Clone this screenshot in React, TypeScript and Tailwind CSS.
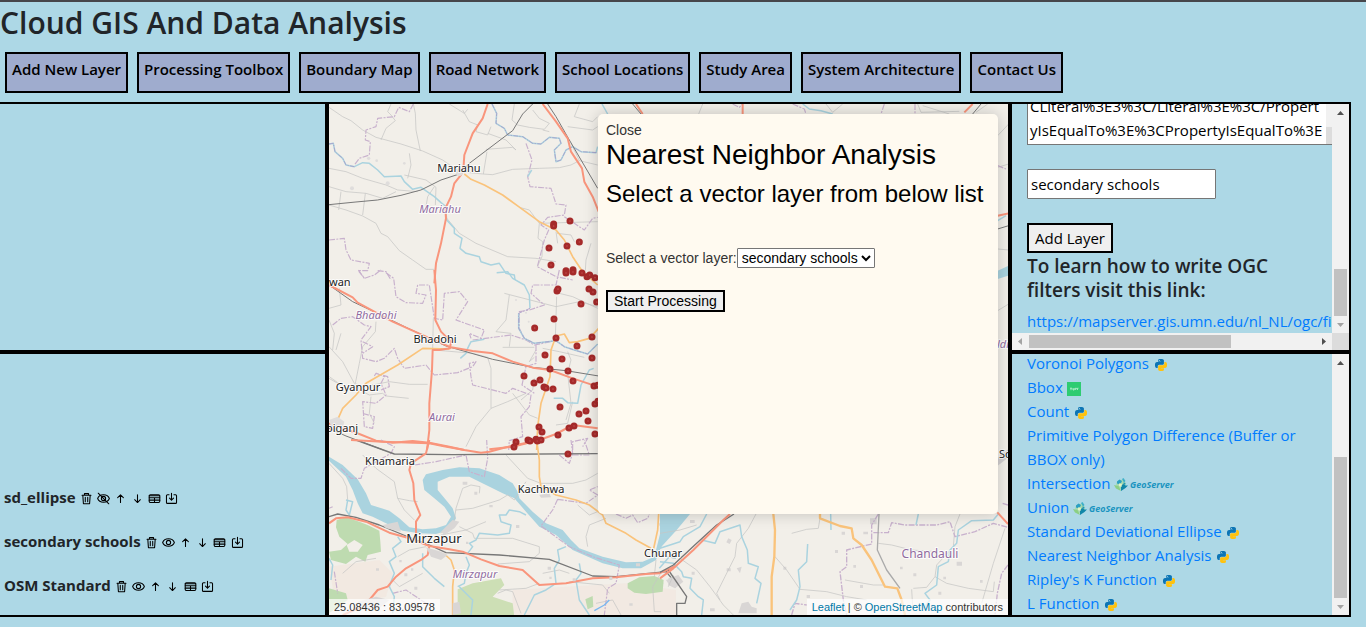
import type { ReactNode } from 'react';

const navItems = [
  'Add New Layer',
  'Processing Toolbox',
  'Boundary Map',
  'Road Network',
  'School Locations',
  'Study Area',
  'System Architecture',
  'Contact Us',
];

const layers = [
  { name: 'sd_ellipse', visible: false },
  { name: 'secondary schools', visible: true },
  { name: 'OSM Standard', visible: true },
];

const tools = [
  { name: 'Voronoi Polygons', engine: 'python' },
  { name: 'Bbox', engine: 'turf' },
  { name: 'Count', engine: 'python' },
  { name: 'Primitive Polygon Difference (Buffer or BBOX only)', engine: '' },
  { name: 'Intersection', engine: 'geoserver' },
  { name: 'Union', engine: 'geoserver' },
  { name: 'Standard Deviational Ellipse', engine: 'python' },
  { name: 'Nearest Neighbor Analysis', engine: 'python' },
  { name: "Ripley's K Function", engine: 'python' },
  { name: 'L Function', engine: 'python' },
];

const northSchools = [
  [683, 372], [683, 378], [732, 363], [760, 426], [669, 444], [723, 438], [675, 495], [720, 512],
  [720, 519], [741, 509], [741, 516], [768, 519], [783, 530], [791, 525], [807, 533],
];

const southSchools = [
  [693, 63], [696, 57], [789, 57], [801, 66], [765, 102], [812, 96], [684, 147], [626, 174], [690, 204],
  [798, 201], [753, 228], [657, 255], [708, 267], [798, 264], [672, 297], [726, 303], [741, 333],
  [594, 318], [624, 339], [642, 330], [654, 351], [660, 354], [681, 357], [804, 348], [815, 346],
  [702, 411], [807, 402], [816, 394], [780, 423], [759, 432], [786, 453], [744, 468], [729, 474],
  [639, 471], [648, 486], [696, 495], [807, 492], [606, 510], [612, 513], [630, 508], [634, 513],
  [645, 510], [570, 516], [564, 531], [726, 552],
];

function PythonIcon() {
  return (
    <svg viewBox="0 0 24 24" className="ml-0.5 inline-block size-3" aria-hidden="true">
      <path fill="#0c75b5" d="M14.25.18l.9.2.73.26.59.3.45.32.34.34.25.34.16.33.1.3.04.26.02.2-.01.13V8.5l-.05.63-.13.55-.21.46-.26.38-.3.31-.33.25-.35.19-.35.14-.33.1-.3.07-.26.04-.21.02H8.77l-.69.05-.59.14-.5.22-.41.27-.33.32-.27.35-.2.36-.15.37-.1.35-.07.32-.04.27-.02.21v3.06H3.17l-.21-.03-.28-.07-.32-.12-.35-.18-.36-.26-.36-.36-.35-.46-.32-.59-.28-.73-.21-.88-.14-1.05-.05-1.23.06-1.22.16-1.04.24-.87.32-.71.36-.57.4-.44.42-.33.42-.24.4-.16.36-.1.32-.05.24-.01h.16l.06.01h8.16v-.83H6.18l-.01-2.75-.02-.37.05-.34.11-.31.17-.28.25-.26.31-.23.38-.2.44-.18.51-.15.58-.12.64-.1.71-.06.77-.04.84-.02 1.27.05zm-6.3 1.98l-.23.33-.08.41.08.41.23.34.33.22.41.09.41-.09.33-.22.23-.34.08-.41-.08-.41-.23-.33-.33-.22-.41-.09-.41.09z" />
      <path fill="#ffc20e" d="M21.1 6.11l.28.06.32.12.35.18.36.27.36.35.35.47.32.59.28.73.21.88.14 1.04.05 1.23-.06 1.23-.16 1.04-.24.86-.32.71-.36.57-.4.45-.42.33-.42.24-.4.16-.36.09-.32.05-.24.02-.16-.01h-8.22v.82h5.84l.01 2.76.02.36-.05.34-.11.31-.17.29-.25.25-.31.24-.38.2-.44.17-.51.15-.58.13-.64.09-.71.07-.77.04-.84.01-1.27-.04-1.07-.14-.9-.2-.73-.25-.59-.3-.45-.33-.34-.34-.25-.34-.16-.33-.1-.3-.04-.25-.02-.2.01-.13v-5.34l.05-.64.13-.54.21-.46.26-.38.3-.32.33-.24.35-.2.35-.14.33-.1.3-.06.26-.04.21-.02.13-.01h5.84l.69-.05.59-.14.5-.21.41-.28.33-.32.27-.35.2-.36.15-.36.1-.35.07-.32.04-.28.02-.21V6.07h2.09z" />
    </svg>
  );
}

function TurfIcon() {
  return (
    <svg viewBox="0 0 14 14" className="inline-block size-3.5" aria-hidden="true">
      <rect width="14" height="14" fill="#2ecc71" />
      <path d="M3 6.2h2M4 6.2v2M6 6v2h1.2V6M8.4 8V6.2h1v1M10.5 8V6.2h1" stroke="#d9f7e5" strokeWidth=".7" fill="none" />
    </svg>
  );
}

function GeoServerIcon() {
  return (
    <svg viewBox="0 0 61 14" className="inline-block h-3.5 w-[61px]" aria-hidden="true">
      <circle cx="7" cy="6.500" r="4.800" fill="#a5d9b0" />
      <path d="M3 3.500L5.500 1.500 8 3 7 5 4.500 6 3 5.500z" fill="#2a9fc4" />
      <path d="M8 1l1.500-1 2 3L10 4.500z" fill="#3fb0c8" />
      <path d="M0 7l4.500 1L7 13 2 10.500z" fill="#8ccf84" />
      <path d="M7 7.500L9.500 6l2 1.500H14L11.500 10 7 13z" fill="#1187a8" />
      <path d="M5 5.500l3 .5L7.500 9 5 8z" fill="#e2f3c4" />
      <path d="M9.500 4.500l2 .5-.5 2-1.500-1z" fill="#1f94b8" />
      <text x="16" y="10" fontFamily="'Open Sans', sans-serif" fontSize="9" fontStyle="italic" fontWeight="700" fill="#1a94c0">
        GeoServer
      </text>
    </svg>
  );
}

function IconButton({ label, children }: { label: string; children: ReactNode }) {
  return (
    <button type="button" aria-label={label} className="inline-block align-middle">
      <svg viewBox="0 0 16 16" className="size-[13px] fill-none stroke-black" strokeWidth="1.300" strokeLinecap="round" strokeLinejoin="round">
        {children}
      </svg>
    </button>
  );
}

function LayerRow({ name, visible }: { name: string; visible: boolean }) {
  return (
    <li className="text-base leading-6 whitespace-nowrap">
      <span className="text-[15px] font-bold">{name}</span>{' '}
      <IconButton label={`Remove ${name}`}>
        <path d="M2.500 4h11M5.500 4V2h5v2M3.500 4.500l.7 10h7.600l.7-10M6.500 6.500v5.500M9.500 6.500v5.500" />
      </IconButton>{' '}
      <IconButton label={visible ? `Hide ${name}` : `Show ${name}`}>
        <path d="M.8 8C3 1.800 13 1.800 15.200 8 13 14.200 3 14.200.8 8z" />
        <circle cx="8" cy="8" r="2.600" />
        {!visible && <path d="M1.500 1.500l13 13" />}
      </IconButton>{' '}
      <IconButton label={`Move ${name} up`}>
        <path d="M8 13V3.500M4.500 7L8 3.500 11.500 7" />
      </IconButton>{' '}
      <IconButton label={`Move ${name} down`}>
        <path d="M8 3.500V13M4.500 9.500L8 13l3.500-3.500" />
      </IconButton>{' '}
      <IconButton label={`Attribute table of ${name}`}>
        <rect x="1.500" y="3.500" width="13" height="9.500" rx="1.500" />
        <path d="M1.500 4.500h13M1.500 7h13M1.500 10h13M8 7v6" />
      </IconButton>{' '}
      <IconButton label={`Download ${name}`}>
        <path d="M5 3.500H3Q1.800 3.500 1.800 4.700V12.800Q1.800 14 3 14H13Q14.200 14 14.200 12.800V4.700Q14.200 3.500 13 3.500H11M8 1.500V10M5.500 7.500L8 10l2.500-2.500" />
      </IconButton>
    </li>
  );
}

function Arrow({ d, dim = false }: { d: string; dim?: boolean }) {
  return (
    <svg viewBox="0 0 17 17" className="size-[17px] shrink-0" aria-hidden="true">
      <path d={d} fill={dim ? '#a3a3a3' : '#505050'} />
    </svg>
  );
}

function VerticalBar({ children }: { children: ReactNode }) {
  return (
    <div className="flex w-[17px] shrink-0 flex-col items-center bg-[#f1f1f1]">
      <Arrow d="M5 11h7L8.500 7z" />
      {children}
      <Arrow d="M5 7h7L8.500 11z" dim />
    </div>
  );
}

function Dots({ points }: { points: number[][] }) {
  return (
    <>
      {points.map(([x, y]) => (
        <g key={`${x}-${y}`}>
          <circle cx={x} cy={y} r="10.500" fill="#a52a2a" />
          <circle cx={x} cy={y} r="2.500" fill="#c24b4b" />
        </g>
      ))}
    </>
  );
}

// Each group is drawn at three units to the pixel and placed on the map
function BaseMap() {
  const road = { stroke: '#f9957c', strokeWidth: 6 };
  const primary = { stroke: '#fac37b', strokeWidth: 5 };
  const rail = { stroke: '#777', strokeWidth: 3 };
  const minor = { stroke: '#c6c5c4', strokeWidth: 2.2 };
  const river = { stroke: '#aad3df', strokeWidth: 4.5 };
  const border = { stroke: '#c8b1cd', strokeWidth: 3.5, strokeDasharray: '18 4 6 4' };
  return (
    <svg
      viewBox="0 0 679 511"
      preserveAspectRatio="xMinYMin slice"
      className="absolute inset-0 size-full bg-[#f2efe9]"
      fill="none"
      strokeLinejoin="round"
      role="img"
      aria-label="Map of the study area"
    >
      {/* north west */}
      <g transform="translate(-3 -4) scale(.33333)">
        <g {...minor}>
          <path d="M9 22L50 50 75 62 110 90 150 112 225 132 290 153 350 180 400 215 470 222 500 224 560 208 640 205 700 203 735 195 760 182 815 195" />
          <path d="M165 120L180 85 208 62 195 45 185 35 195 12M262 12L268 40 270 90 283 153M250 160L255 195 245 235M483 155L472 222M370 12L415 40 425 28M410 30L430 65 455 75 450 95 485 105 495 80M485 100L540 120 570 150 560 142 480 148M565 12L558 60 575 75 610 82 655 88 670 70 640 55 620 30M650 90L670 95M9 205L60 215 110 235 180 255 215 270 275 275M9 260L60 275 120 280 170 295 210 275M45 275L38 330M118 280L110 345M9 315L60 330 110 348 150 370 165 400 185 410 220 452 260 480 300 508 325 508" />
          <path d="M360 352L400 400 450 430 545 470 630 475 690 485M325 260L305 290 300 320M235 225L300 240 330 262 328 315M580 322L610 330 640 370 636 415 650 425 648 470 634 500M690 395L695 430M693 400L735 405 745 425M795 430L780 480 778 512M760 12L745 50 800 65 815 50M725 80L800 90 815 80M760 182L735 130M640 370L815 365" />
        </g>
        <g {...border}>
          <path d="M262 12L250 35 218 22 205 50 155 55 150 80 120 90 118 120 133 125 130 165 100 175 85 195M9 420L55 415 60 450 75 480 130 490 125 512 97 512 115 535M155 512L180 515 195 540M600 130L618 180 605 230 612 260 675 265 690 312 720 315 715 345 665 352 645 375 668 390 655 420 634 500 690 530 740 540M715 350L745 370 775 390 800 355 815 352" />
        </g>
        <g {...river}>
          <path d="M9 132L22 130 27 155 50 175 60 195 85 200 110 188 130 190 155 210 175 230 225 228 235 245 260 268 285 262 325 290 345 308 358 318 362 360 385 385 385 400 408 415 402 445 420 460 460 470 465 485 495 495 520 490 540 520 565 525 567 540" />
          <path d="M498 12L512 40 510 70 535 85 545 105 590 110 620 130 645 132 670 112 700 115 705 130 685 150 690 185 705 180 720 150 740 140 765 155 810 158 815 140" />
          <path d="M617 210L605 230" />
        </g>
        <g stroke="#a79ac8" strokeWidth="2.400" strokeDasharray="14 4 4 4">
          <path d="M498 12L512 40 510 70 535 85 545 105 590 110 620 130 645 132 670 112 700 115 705 130 685 150 690 185 705 180 720 150 740 140 765 155 815 158M9 132L22 130 27 155 50 175 60 195 85 200" />
        </g>
        <g {...rail}>
          <path d="M9 314L90 306 155 300 225 286 285 270 345 240 400 222 430 190 545 103 560 92 590 42 620 12M665 12L690 50 730 120 815 265" />
        </g>
        <path {...primary} d="M415 222L435 238 475 255 530 285 578 320 640 365 690 390 715 420 740 470 770 515 815 555" />
        <g {...road}>
          <path d="M485 12L470 55 440 100 415 165 413 195 405 225 385 250 375 290 358 325 360 355 345 430 330 490 325 550M650 12L690 65 725 115 735 155 768 205 775 245 800 290 818 335" />
        </g>
        <g fill="#dfdddc" stroke="none">
          <circle cx="185" cy="250" r="6" />
          <circle cx="78" cy="265" r="6" />
          <circle cx="128" cy="175" r="5" />
          <circle cx="152" cy="182" r="4" />
          <circle cx="235" cy="190" r="4" />
          <circle cx="400" cy="218" r="10" />
        </g>
      </g>

      {/* west */}
      <g transform="translate(-3 166) scale(.33333)">
        <g {...minor}>
          <path d="M40 55L45 105 9 115M150 155L148 185 110 230 100 280 88 340M9 230L50 275 85 340 115 350 155 342 190 335 250 343 305 343M10 320L45 345M100 360L130 375 170 370 180 378 248 385M9 150L25 190 20 240M45 190L30 240M322 145L320 240M325 240L440 250 485 262 495 295 495 415 450 470 420 530M495 415L545 395 600 370M535 70L690 110 760 95 815 110M550 75L540 150 510 185 555 190 550 230M530 232L625 232M692 80L688 205M625 262L610 275 630 240M650 235L700 245 775 262M725 245L735 270 725 310 735 400 720 450M625 325L620 360 585 390M700 70L740 80 815 115M740 395L725 460 690 465M560 370L610 435 635 445M9 325L35 340M135 380L130 430 145 460" />
        </g>
        <g {...border}>
          <path d="M97 0L115 25 145 15 165 0M180 8L203 25 210 80 240 98 290 100 300 75 270 70 275 45 310 45 325 145 350 150 355 70 400 65 425 95 390 150 475 180 465 205 430 190 435 205M20 165L45 145 80 140 115 165 135 170 105 210 110 265 150 275 175 265 205 235 215 265 235 295 300 285 325 315 395 308 440 290 450 275 430 280 435 320 440 345 540 370 560 355 615 375 610 410 585 440 590 500 550 512 548 540M110 215L140 230 110 250M150 310L175 320 165 340 180 375 150 400 110 395 115 470 140 475 145 440 110 430M440 210L555 195 600 210 625 225 690 212 715 230M630 225L630 280 600 290 588 345 625 370M700 0L690 45 620 45 615 70 655 105 610 120 580 125 580 175 595 205 625 220M740 540L740 515 785 505 770 530M145 318L150 310 185 320 190 350 165 360" />
        </g>
        <g {...river}>
          <path d="M403 265L420 250 425 235 435 215 475 208M512 8L545 5 560 25 595 45 610 75 612 115M578 130L578 175 595 205 625 220 690 212 715 230 745 240 785 252 815 222M803 295L790 300 765 345 755 400 725 398 710 385 683 385" />
        </g>
        <g stroke="#a79ac8" strokeWidth="2.400" strokeDasharray="14 4 4 4">
          <path d="M612 115L578 130 578 175 595 205 625 220 690 212 715 230 745 240 785 252 815 222" />
        </g>
        <path {...rail} d="M9 45L80 95 150 128 240 172 360 228 500 268 620 292 720 302 818 318M9 475L60 498 172 540" />
        <g {...primary}>
          <path d="M370 237L290 235 215 285 120 340 90 375 50 415 30 460M818 175L790 205 755 215 730 218 715 192 690 198 675 240 672 320 645 400 635 470 632 540" />
        </g>
        <g {...road}>
          <path d="M9 45L80 82 95 98 200 155 300 200 375 232 440 243 500 250 560 275 620 293 672 300 740 325 815 350M325 0L330 60 328 150 345 185 375 215 372 235 340 240 320 240 318 300 310 400 310 480 303 540M9 460L100 492 150 512 200 518 260 513 310 518 370 530 415 540M490 538L560 530 640 510 690 492 740 465 815 475" />
        </g>
        <g fill="#dfdddc" stroke="none">
          <path d="M9 450L35 440 55 455 50 475 15 470z" />
          <circle cx="90" cy="352" r="9" />
          <circle cx="600" cy="128" r="3" />
          <circle cx="570" cy="90" r="3" />
          <circle cx="608" cy="155" r="3" />
        </g>
      </g>

      {/* south west */}
      <g transform="translate(-3 336) scale(.33333)">
        <g stroke="none">
          <path d="M9 380L160 360 200 400 180 470 30 500z" fill="#f1e4dc" fillOpacity=".6" />
          <path d="M560 450L900 430 1050 450V530H560z" fill="#f1e4dc" fillOpacity=".5" />
        </g>
        <g fill="#bedbb0" stroke="none">
          <path d="M32 240L60 232 100 245 125 255 160 272 163 305 165 335 125 345 118 365 90 350 60 372 15 360 9 335 45 330 65 312 40 290 30 262zM905 430L940 412 985 408 1013 420 1010 455 960 462 925 458 905 445zM778 478L800 468 802 500 785 508z" />
          <path d="M9 445L60 460 65 480 9 520z" />
          <path d="M395 448L440 430 525 415 535 435 500 470 560 490 565 530H375L395 490z" fill="#cddfb5" />
        </g>
        <path d="M62 315L85 300 110 315 95 335 70 335z" fill="#f2efe9" />
        <g fill="#aad3df" stroke="none">
          <path d="M9 50L50 75 95 118 120 160 135 195 190 212 220 235 250 262 290 268 330 265 360 255 375 230 355 200 325 175 295 150 290 120 300 103 350 90 400 82 460 85 520 105 560 130 575 155 580 175 620 215 660 250 710 270 735 300 760 325 830 350 900 367 950 365 985 350 1005 270 1020 222H1050V245L1010 310 990 360 945 385 890 385 830 370 740 330 690 285 640 260 600 215 565 175 530 160 480 135 430 110 370 110 335 125 335 150 360 180 380 205 390 235 370 270 330 282 280 280 230 272 180 250 140 230 110 220 95 190 80 150 60 110 9 62z" />
        </g>
        <g {...minor}>
          <path d="M9 70L50 115 62 140 65 180M110 45L150 85 205 125 215 175 235 210 265 240M215 175L250 182 275 185M345 280L385 240 390 205 410 145 435 135 462 140 460 160M390 210L440 205 520 180 545 165 565 180 600 125M540 45L605 115 645 130 740 130 780 120 815 100M755 195L790 225 815 215M840 235L790 255 780 290 785 320M400 260L440 280 445 295 560 295 640 320 640 340 610 365 515 372M650 400L700 390 730 400M345 285L420 270 480 245M515 460L540 450 560 455 585 520M730 425L830 435 850 460M215 350L250 330 300 320M200 420L220 440 290 400M1010 390L980 440 985 515 1005 515M990 360L985 410M50 400L90 365 150 355M640 430L600 445 520 450M810 490L860 480 885 525" />
        </g>
        <g {...border}>
          <path d="M45 85L75 115 105 115 115 85 195 40 205 20 165 0M265 75L330 65 420 45 430 95 475 110 485 55 482 0M695 178L680 210 645 258 730 320 800 350 880 375 870 430 845 445 835 525M695 178L780 190 815 165 790 150 815 140M700 45L730 70 740 40 735 0M740 45L790 45 775 0M25 395L35 460M870 222L900 235 920 225 935 248 965 235 970 222M9 205L20 200M200 460L240 450 300 490" />
        </g>
        <g {...river}>
          <path d="M600 225L580 215 550 210 540 225 520 225 525 245 555 255 550 280 515 285 460 280 450 300 430 310 440 320 425 340M215 290L225 305 200 325 210 350 190 365 205 400 195 425 190 440 205 470 200 520M290 340L290 380 325 415 355 440M420 350L430 375 420 400 415 430 395 440M400 440L440 480 435 525M720 320L695 330 700 360 685 385 690 430 660 450 625 465 595 525M760 370L765 400 750 420 760 480 790 525M60 180L80 185 70 225 60 210 65 180M9 355L20 375 15 420M1000 385L1030 350 1050 355" />
        </g>
        <path {...rail} d="M90 0L205 42 380 44 815 41M9 230L35 222 90 232 160 255 240 288 310 315 360 338 520 345 670 358 800 408 870 410 1020 395 1050 375M1020 395L1050 430" strokeWidth="4" />
        <g {...primary}>
          <path d="M632 0L640 60 640 110 645 140 690 165 750 180 790 195 830 225 840 250 900 280 930 300 975 325M998 222L995 270 983 325M355 342L375 360 385 390 380 440 380 525" />
        </g>
        <g {...road}>
          <path d="M75 0L170 5 310 10 350 18 415 30 465 38 490 35 540 22 640 0M310 0L300 40 255 70 250 90 262 130 265 180 283 225 270 245 270 300M9 250L30 235 65 232 120 245 190 278 250 295 310 318 370 328 410 335 465 358 520 378 590 390 640 435 720 430 800 415 870 412 960 402 1000 400 1050 378M310 318L305 345 285 360 240 385 210 410 185 440 155 450 130 480 110 500 50 525" />
        </g>
        <path d="M805 512L835 495 850 480" stroke="#7ab8f0" strokeWidth="4" />
        <g fill="#d9d6d5" stroke="none">
          <path d="M170 255L215 245 225 275 180 265zM300 322L345 335 365 345 345 360 315 350zM345 275L380 240 400 245 385 265 355 285zM640 165L670 160 675 172 645 173zM380 490L400 485 405 520 380 525zM95 485L150 470 190 480 160 505 110 510zM1020 420L1050 410V445L1030 435z" />
          <path d="M410 125h14v9h-14zM445 155h9v9h-9zM420 305h7v7h-7zM490 195h10v7h-10zM570 255h10v9h-10zM235 400h9v9h-9zM150 385h9v7h-9zM265 440h9v9h-9zM665 380h10v9h-10zM670 410h7v7h-7zM740 415h9v9h-9zM850 410h9v10h-9zM910 490h10v7h-10zM930 370h12v9h-12zM1000 250h7v7h-7zM220 360h7v7h-7zM255 385h7v7h-7z" />
        </g>
      </g>

      {/* south east */}
      <g transform="translate(331 396) scale(.33333)">
        <path d="M0 42H90L50 90 0 145z" fill="#aad3df" />
        <path d="M0 235L10 250 0 265z" fill="#bedbb0" />
        <g fill="#d9d6d5">
          <path d="M25 235L55 225 70 245 45 265 25 255zM245 310L265 305 275 320 290 325V340H235zM230 205l15-5-5 20zM205 115l10 5-6 12-10-5zM630 55h20v18h-20zM890 185h16v12h-16zM525 150h9v9h-9zM545 95h10v9h-10zM440 285h10v9h-10zM610 95h14v8h-14zM150 325h14v9h-14zM200 205h12v9h-12zM90 60h14v9h-14zM370 200h9v9h-9zM760 220h9v9h-9zM720 200h8v8h-8zM960 240h8v8h-8zM95 215h9v9h-9zM600 255h9v9h-9zM850 230h8v8h-8zM580 195h8v8h-8zM835 275h9v9h-9z" />
        </g>
        <g {...minor}>
          <path d="M288 42L265 85 230 130 225 170 195 230 170 280 180 300M60 175L110 210 150 260 190 315 220 345M345 170L380 210 420 268 500 275 560 290 620 300M395 100L440 88 475 85 480 55M555 240L640 255 670 255M655 130L695 135 755 150 830 155M760 265L800 262 825 230 830 195 880 140 885 80 900 42M825 230L860 250 925 265 1000 275 1003 245M1035 85L1000 190 965 310M755 268L758 320M40 225L25 260M45 175L0 165M0 100L60 90 110 75" />
        </g>
        <g {...border} strokeWidth="4">
          <path d="M655 42L635 75 635 132 560 150 560 200 540 215 550 300 560 345M640 98L685 98 695 68 735 75 830 75 870 65 885 110 945 95 1000 70 1044 82M1044 15L1028 10M1044 195L1025 220 1012 280 1005 345M395 345L405 310 440 315" />
        </g>
        <g {...river}>
          <path d="M140 42L120 80 70 110 60 125 0 145M125 120L165 130 180 95 240 75 245 110 262 150 265 190 295 200 285 235 303 250 290 310M0 185L40 190 65 215 70 230 95 235 90 265 115 290 130 300 125 345M443 132L440 185 415 210 420 260 410 300 390 330M512 42L513 90M775 42L768 75M1015 42L1000 60 935 62 895 90 890 130 870 150 865 185 835 200 830 255 795 280 810 300 790 325" />
        </g>
        <path {...rail} d="M222 42L170 75 110 130 40 195 0 217M25 210L80 290 75 310 50 310 50 345" strokeWidth="4" />
        <path d="M657 42L652 150 680 210 720 265" stroke="#aaa" strokeWidth="4" />
        <g {...primary} strokeWidth="7">
          <path d="M340 42L345 90 343 170 335 230 335 345M480 42L480 55 540 78 575 85 580 115 605 135 635 180 675 260 712 265 725 300 735 345" />
        </g>
        <path {...road} d="M210 42L190 60 100 150 40 205 0 235M1012 37L1044 72" />
      </g>

      {/* north and east edges around the dialog */}
      <g transform="translate(267 0) scale(.33333)">
        <g {...minor}>
          <path d="M320 0L308 30M690 0L710 25 740 0M965 0L975 25 1090 22M980 5L1060 30M1140 25L1175 0M1205 95L1238 60M1205 190L1238 180M1205 435L1238 438M1205 620L1238 600" />
        </g>
        <g {...border}>
          <path d="M410 0L430 10 440 0M590 0L625 15 630 30M865 0L855 30M957 0L957 30M1205 185L1230 195" />
        </g>
        <path {...river} d="M620 0L640 15 675 20 710 30M18 0L35 30M1205 350L1230 335" />
        <path d="M1205 500L1238 485V515L1205 525z" fill="#aad3df" />
        <path d="M1205 1060L1238 1035V1060L1205 1085z" fill="#d3d0d1" />
        <path {...road} d="M120 0L140 30M440 0L440 30M1130 0L1105 25M1205 335L1238 328" />
        <path {...rail} d="M110 0L135 30M1155 0L1130 30M1205 375L1238 365" />
      </g>

      <g transform="translate(-3 -4) scale(.33333)">
        <Dots points={northSchools} />
      </g>
      <g transform="translate(-3 166) scale(.33333)">
        <Dots points={southSchools} />
      </g>

      <g fontFamily="'Noto Sans', sans-serif" fontSize="11" fill="#222" stroke="#fff" strokeOpacity=".8" strokeWidth="2" paintOrder="stroke" textAnchor="middle">
        <text x="130" y="68">Mariahu</text>
        <text x="106" y="239">Bhadohi</text>
        <text x="29" y="287">Gyanpur</text>
        <text x="0" y="182" textAnchor="start">wan</text>
        <text x="-3" y="328" textAnchor="start">oiganj</text>
        <text x="61" y="361">Khamaria</text>
        <text x="212" y="389">Kachhwa</text>
        <text x="105" y="439" fontSize="13">Mirzapur</text>
        <text x="334" y="453">Chunar</text>
        <text x="670" y="354" textAnchor="start">Sd</text>
        <g fill="#8f6ba0" fontStyle="italic">
          <text x="111" y="109">Mariahu</text>
          <text x="47" y="215">Bhadohi</text>
          <text x="113" y="317">Aurai</text>
          <text x="146" y="474">Mirzapur</text>
          <text x="668" y="244" textAnchor="start">ldi</text>
        </g>
        <text x="601" y="454" fontSize="12" fill="#8f6ba0">Chandauli</text>
      </g>
    </svg>
  );
}

function AnalysisDialog() {
  return (
    <div
      role="dialog"
      aria-labelledby="dialog-title"
      className="absolute top-2.5 right-2.5 h-[400px] w-[400px] rounded-[5px] bg-[#fffaf0] px-2 py-1.5 font-['Liberation_Sans',sans-serif] text-sm leading-5 text-black shadow-[0_0_15px_rgba(0,0,0,0.2)]"
    >
      <button type="button" className="block text-[#333]">Close</button>
      <h2 id="dialog-title" className="mb-2.5 text-[28px] leading-[30px]">Nearest Neighbor Analysis</h2>
      <h3 className="text-2xl leading-7">Select a vector layer from below list</h3>
      <div className="mt-10 flex items-center">
        <label htmlFor="vector-layer" className="text-[#333]">Select a vector layer:</label>
        <select id="vector-layer" className="h-5 rounded-[1px] border border-[#767676] bg-white text-sm leading-4">
          <option>secondary schools</option>
          <option>sd_ellipse</option>
        </select>
      </div>
      <button type="button" className="mt-[22px] block h-[22px] border-2 border-black bg-[#efefef] px-1.5 leading-4">
        Start Processing
      </button>
    </div>
  );
}

export default function App() {
  return (
    <div className="min-h-screen border-t-2 border-[#46464b] bg-[#add8e6] font-['Open_Sans',sans-serif] text-[#212529]">
      <header className="pb-[9px]">
        <h1 className="text-[30px] leading-[42px] font-semibold">Cloud GIS And Data Analysis</h1>
        <nav className="mt-2 flex flex-wrap gap-[9px] pl-[5px]">
          {navItems.map((item) => (
            <button key={item} type="button" className="border-2 border-black bg-[#9facce] px-[5px] pt-[3px] pb-[10px] text-[15px] leading-6 font-semibold text-black">
              {item}
            </button>
          ))}
        </nav>
      </header>

      <main className="mr-[15px] grid grid-cols-[327fr_683fr_341fr]">
        <div className="grid min-w-0 grid-rows-[250px_265px]">
          <section className="border-y-2 border-r-2 border-black" aria-label="Legend" />
          <section className="flex flex-col justify-end border-y-2 border-r-2 border-black pb-[18px] pl-1" aria-label="Layers">
            <ul className="flex flex-col gap-5">
              {layers.map((layer) => (
                <LayerRow key={layer.name} {...layer} />
              ))}
            </ul>
          </section>
        </div>

        <section className="relative min-w-0 overflow-hidden border-2 border-black" aria-label="Map">
          <BaseMap />
          <AnalysisDialog />
          <div className="absolute bottom-0 left-0 bg-white/70 px-[5px] font-['Liberation_Sans',sans-serif] text-[11px] leading-4 text-[#333]">
            25.08436 : 83.09578
          </div>
          <div className="absolute right-0 bottom-0 bg-white/70 px-[5px] font-['Liberation_Sans',sans-serif] text-[11px] leading-4 text-[#333]">
            <a href="#leaflet" className="text-[#0078a8]">Leaflet</a> | ©{' '}
            <a href="#osm" className="text-[#0078a8]">OpenStreetMap</a> contributors
          </div>
        </section>

        <div className="grid min-w-0 grid-rows-[250px_265px]">
          <section className="flex min-w-0 flex-col border-2 border-black" aria-label="Add layer">
            <div className="flex min-h-0 grow">
              <div className="flex min-w-0 grow flex-col items-start justify-end overflow-hidden pb-0.5 pl-[15px]">
                <div className="flex w-[330px] shrink-0">
                  <textarea
                    aria-label="OGC filter"
                    rows={2}
                    className="w-[299px] resize-none overflow-hidden border border-r-0 border-[#767676] bg-white px-0.5 pb-0.5 text-[15px] leading-6 whitespace-pre text-black"
                    defaultValue={'CLiteral%3E3%3C/Literal%3E%3C/Propert\nyIsEqualTo%3E%3CPropertyIsEqualTo%3E'}
                  />
                  <div className="flex w-4 flex-col justify-end border-b border-[#767676] bg-[#f1f1f1]">
                    <div className="h-[17px] bg-[#dcdcdc]" />
                  </div>
                </div>
                <input
                  aria-label="Layer name"
                  defaultValue="secondary schools"
                  className="mt-6 h-[30px] w-[189px] shrink-0 rounded-[1px] border border-[#767676] bg-white px-[3px] text-[15px] text-black"
                />
                <button type="button" className="mt-6 h-[30px] shrink-0 border-2 border-black bg-[#efefef] px-1.5 text-[15px] leading-6 text-black">
                  Add Layer
                </button>
                <h5 className="mt-px mb-[9px] pr-6 text-[19px] leading-6 font-semibold">To learn how to write OGC filters visit this link:</h5>
                <a href="#ogc-filters" className="text-[15px] leading-5 whitespace-nowrap text-[#007bff]">
                  https://mapserver.gis.umn.edu/nl_NL/ogc/filter_encoding.html
                </a>
              </div>
              <VerticalBar>
                <div className="mt-auto h-[47px] w-[13px] bg-[#c1c1c1]" />
              </VerticalBar>
            </div>
            <div className="flex h-[17px] shrink-0 bg-[#dcdcdc]">
              <div className="flex grow items-center justify-between bg-[#f1f1f1]">
                <Arrow d="M10 5v7L6 8.500z" dim />
                <div className="mr-auto h-[13px] w-[202px] bg-[#c1c1c1]" />
                <Arrow d="M7 5v7L11 8.500z" />
              </div>
              <div className="w-[17px]" />
            </div>
          </section>

          <section className="flex min-w-0 border-2 border-black" aria-label="Processing tools">
            <div className="flex min-w-0 grow flex-col justify-end overflow-hidden pl-[15px]">
              <ul className="text-[15px] leading-6 text-[#007bff]">
                {tools.map(({ name, engine }) => (
                  <li key={name}>
                    <a href="#tool">{name}</a>{' '}
                    {engine === 'python' && <PythonIcon />}
                    {engine === 'turf' && <TurfIcon />}
                    {engine === 'geoserver' && <GeoServerIcon />}
                  </li>
                ))}
              </ul>
            </div>
            <VerticalBar>
              <div className="mt-auto h-[141px] w-[13px] bg-[#c1c1c1]" />
            </VerticalBar>
          </section>
        </div>
      </main>
    </div>
  );
}
